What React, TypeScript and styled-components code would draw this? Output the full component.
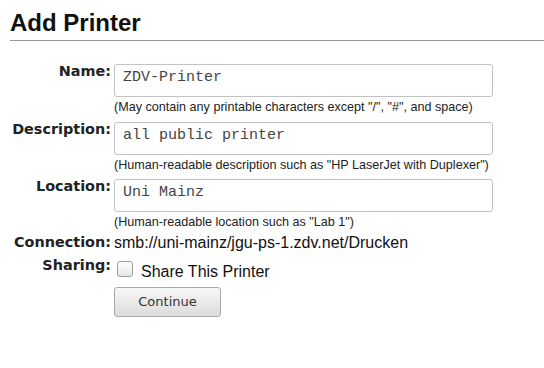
import React from 'react'
import styled, { createGlobalStyle } from 'styled-components'

const GlobalStyle = createGlobalStyle`
    html, body {
        margin: 0;
        padding: 0;
        background: #fff;
    }
    body {
        font-family: "Liberation Sans", Arial, sans-serif;
        color: #111;
    }
`

const Page = styled.div`
    padding: 0 0 0 10px;
`

const Title = styled.h2`
    margin: 0;
    padding: 9px 0 3px;
    font-family: "Liberation Sans", Arial, sans-serif;
    font-size: 24px;
    line-height: 28px;
    font-weight: bold;
    color: #111;
    border-bottom: 1px solid #999;
`

const Row = styled.div<{ $top: number }>`
    display: grid;
    grid-template-columns: 101px 379px;
    column-gap: 3px;
    align-items: start;
    margin-top: ${({ $top }) => $top}px;
`

const Label = styled.div`
    text-align: right;
    font-family: "DejaVu Sans", Verdana, sans-serif;
    font-weight: bold;
    font-size: 14.4px;
    line-height: 17px;
    color: #222;
    white-space: nowrap;
`

const Value = styled.div<{ $pad?: number }>`
    display: flex;
    flex-direction: column;
    align-items: flex-start;
    padding-top: ${({ $pad }) => $pad || 0}px;
    font-size: 16px;
    line-height: 17px;
    color: #111;
`

const TextField = styled.input`
    box-sizing: border-box;
    width: 379px;
    height: 33px;
    margin: 1px 0 0;
    padding: 4px 8px 10px;
    border: 1px solid #c2c2c2;
    border-radius: 3px;
    background: #fff;
    font-family: "Liberation Mono", "Courier New", monospace;
    font-size: 15px;
    color: #444;
    outline: none;
`

const Help = styled.div`
    margin-top: 3px;
    font-size: 12.6px;
    line-height: 14px;
    color: #222;
`

const CheckLine = styled.label`
    display: flex;
    align-items: flex-start;
    gap: 8px;
    font-size: 16px;
    line-height: 18px;
    color: #111;
`

const Check = styled.input`
    appearance: none;
    box-sizing: border-box;
    width: 16px;
    height: 16px;
    margin: 0 0 0 3px;
    border: 1px solid #9c9c9c;
    border-radius: 3px;
    background: linear-gradient(#ffffff, #e6e6e6);
`

const CheckText = styled.span`
    margin-top: 1.5px;
`

const Button = styled.button`
    box-sizing: border-box;
    width: 107px;
    height: 30px;
    padding: 0;
    border: 1px solid #a9a9a9;
    border-radius: 3px;
    background: linear-gradient(#f7f7f7, #dcdcdc);
    font-family: "DejaVu Sans", Verdana, sans-serif;
    font-size: 13px;
    color: #333;
`

export default function App() {
    return (
        <Page>
            <GlobalStyle />
            <Title>Add Printer</Title>

            <Row $top={22}>
                <Label>Name:</Label>
                <Value>
                    <TextField defaultValue="ZDV-Printer" />
                    <Help>(May contain any printable characters except "/", "#", and space)</Help>
                </Value>
            </Row>

            <Row $top={7}>
                <Label>Description:</Label>
                <Value>
                    <TextField defaultValue="all public printer" />
                    <Help>(Human-readable description such as "HP LaserJet with Duplexer")</Help>
                </Value>
            </Row>

            <Row $top={6}>
                <Label>Location:</Label>
                <Value>
                    <TextField defaultValue="Uni Mainz" />
                    <Help>(Human-readable location such as "Lab 1")</Help>
                </Value>
            </Row>

            <Row $top={5}>
                <Label>Connection:</Label>
                <Value>smb://uni-mainz/jgu-ps-1.zdv.net/Drucken</Value>
            </Row>

            <Row $top={5.5}>
                <Label>Sharing:</Label>
                <Value $pad={4.5}>
                    <CheckLine>
                        <Check type="checkbox" />
                        <CheckText>Share This Printer</CheckText>
                    </CheckLine>
                </Value>
            </Row>

            <Row $top={6}>
                <span />
                <Value>
                    <Button type="button">Continue</Button>
                </Value>
            </Row>
        </Page>
    )
}
